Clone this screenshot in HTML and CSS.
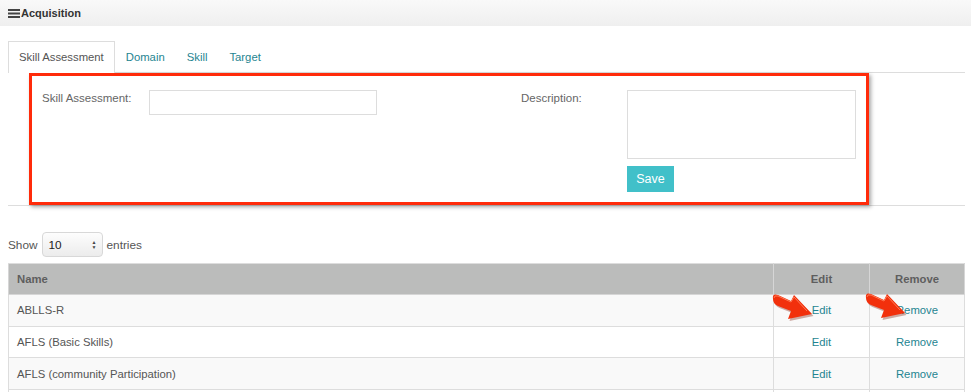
FILE: index.html
```html
<!DOCTYPE html>
<html lang="en">
<head>
  <meta charset="UTF-8">
  <title>Acquisition</title>
  <link rel="stylesheet" href="styles.css">
</head>
<body>
  <div class="panel-head">
    <svg class="menu-icon" width="12" height="9" viewBox="0 0 12 9"><rect x="0" y="0" width="12" height="2"/><rect x="0" y="3.5" width="12" height="2"/><rect x="0" y="7" width="12" height="2"/></svg>Acquisition
  </div>

  <div class="content">
    <ul class="tabs">
      <li class="active"><a href="#">Skill Assessment</a></li>
      <li><a href="#">Domain</a></li>
      <li><a href="#">Skill</a></li>
      <li><a href="#">Target</a></li>
    </ul>

    <div class="tab-pane">
      <form class="assess-form">
        <div class="field">
          <label>Skill Assessment:</label>
          <input type="text">
        </div>
        <div class="field">
          <label>Description:</label>
          <div class="field-stack">
            <textarea></textarea>
            <button type="button" class="btn-save">Save</button>
          </div>
        </div>
      </form>
    </div>

    <div class="length">
      Show
      <span class="select-box">10 <span class="arrows">&#9650;<br>&#9660;</span></span>
      entries
    </div>

    <table class="grid">
      <thead>
        <tr><th class="name">Name</th><th>Edit</th><th>Remove</th></tr>
      </thead>
      <tbody>
        <tr>
          <td class="name">ABLLS-R</td>
          <td class="pin"><svg class="pointer" width="46" height="32" viewBox="0 0 46 32"><path d="M4,8 Q3,2 9,4 L22,10 L25,4 L43,23 L19,28 L22,20 L9,15 Q4,13 4,8 Z" fill="#7a1606" opacity="0.35" transform="translate(1.5,2)"/><path d="M4,8 Q3,2 9,4 L22,10 L25,4 L43,23 L19,28 L22,20 L9,15 Q4,13 4,8 Z" fill="#f2300c"/><path d="M5,7 Q5,4 9,5 L22,11 L25,6 L38,20" fill="none" stroke="#ff7a55" stroke-width="1"/></svg><a href="#">Edit</a></td>
          <td class="pin"><svg class="pointer" width="46" height="32" viewBox="0 0 46 32"><path d="M4,8 Q3,2 9,4 L22,10 L25,4 L43,23 L19,28 L22,20 L9,15 Q4,13 4,8 Z" fill="#7a1606" opacity="0.35" transform="translate(1.5,2)"/><path d="M4,8 Q3,2 9,4 L22,10 L25,4 L43,23 L19,28 L22,20 L9,15 Q4,13 4,8 Z" fill="#f2300c"/><path d="M5,7 Q5,4 9,5 L22,11 L25,6 L38,20" fill="none" stroke="#ff7a55" stroke-width="1"/></svg><a href="#">Remove</a></td>
        </tr>
        <tr>
          <td class="name">AFLS (Basic Skills)</td>
          <td><a href="#">Edit</a></td>
          <td><a href="#">Remove</a></td>
        </tr>
        <tr>
          <td class="name">AFLS (community Participation)</td>
          <td><a href="#">Edit</a></td>
          <td><a href="#">Remove</a></td>
        </tr>
        <tr>
          <td class="name"></td>
          <td></td>
          <td></td>
        </tr>
      </tbody>
    </table>
  </div>
</body>
</html>
```

FILE: styles.css
```css
* {
  box-sizing: border-box;
  margin: 0;
  padding: 0;
}

body {
  font-family: "Liberation Sans", Arial, Helvetica, sans-serif;
  font-size: 11.3px;
  color: #555;
  background: #fff;
  overflow: hidden;
}

a {
  color: #1f8591;
  text-decoration: none;
}

.panel-head {
  height: 26px;
  padding: 0 0 0 8px;
  display: flex;
  align-items: center;
  font-size: 11px;
  font-weight: bold;
  color: #333;
  background: linear-gradient(#f9f9f9, #efefef);
}

.menu-icon {
  fill: #444;
  margin-right: 1px;
}

.content {
  padding: 15px 6px 0 8px;
}

/* tabs */
.tabs {
  list-style: none;
  display: flex;
  height: 32px;
  border-bottom: 1px solid #ddd;
}

.tabs li a {
  display: block;
  height: 32px;
  line-height: 31px;
  padding: 0 10px;
  border: 1px solid transparent;
  border-bottom: none;
}

.tabs li.active a {
  color: #555;
  background: #fff;
  border-color: #ddd;
}

.tab-pane {
  height: 133px;
  padding-left: 21px;
  border-bottom: 1px solid #ddd;
}

.assess-form {
  width: 840px;
  height: 132px;
  border: 3px solid #ff2b0a;
  box-shadow: 2px 2px 4px rgba(0, 0, 0, 0.35);
  padding: 14px 0 0 10px;
  display: grid;
  grid-template-columns: 479px 1fr;
}

.field {
  display: flex;
  align-items: flex-start;
}

.field label {
  width: 107px;
  padding-top: 2px;
  color: #666;
  font-size: 11.5px;
}

.field:last-child label {
  width: 106px;
}

.field input {
  width: 228px;
  height: 25px;
  border: 1px solid #ddd;
}

.field-stack {
  display: flex;
  flex-direction: column;
  align-items: flex-start;
}

.field textarea {
  width: 229px;
  height: 69px;
  border: 1px solid #ddd;
  resize: none;
}

.btn-save {
  margin-top: 7px;
  width: 47px;
  height: 26px;
  border: none;
  background: #41c0c9;
  color: #fff;
  font-family: inherit;
  font-size: 12.5px;
}

/* show entries */
.length {
  display: flex;
  align-items: center;
  gap: 4px;
  margin-top: 26px;
  height: 25px;
  font-size: 11.8px;
}

.select-box {
  width: 61px;
  height: 25px;
  display: flex;
  align-items: center;
  justify-content: space-between;
  padding: 0 5px 0 6px;
  border: 1px solid #d8d8d8;
  border-radius: 4px;
  background: linear-gradient(#fdfdfd, #ececec);
  color: #222;
}

.arrows {
  font-size: 5px;
  line-height: 5px;
  color: #444;
  text-align: center;
}

/* table */
.grid {
  width: 957px;
  margin-top: 6px;
  border-collapse: collapse;
}

.grid th {
  height: 31px;
  background: #bbbcbb;
  color: #5e5e5e;
  font-weight: bold;
  text-align: center;
  border: 1px solid #d6d6d6;
  border-top-color: #ddd;
}

.grid td {
  height: 31.7px;
  text-align: center;
  border: 1px solid #ddd;
}

.grid th.name,
.grid td.name {
  text-align: left;
  padding-left: 8px;
  width: 765px;
}

.grid th:nth-child(2) {
  width: 96px;
}

.grid tbody tr:nth-child(odd) td {
  background: #f9f9f9;
}

.pin {
  position: relative;
}

.pointer {
  position: absolute;
  left: -5px;
  top: -4px;
}

.grid td:last-child .pointer {
  left: -8px;
  top: -5px;
}
```
